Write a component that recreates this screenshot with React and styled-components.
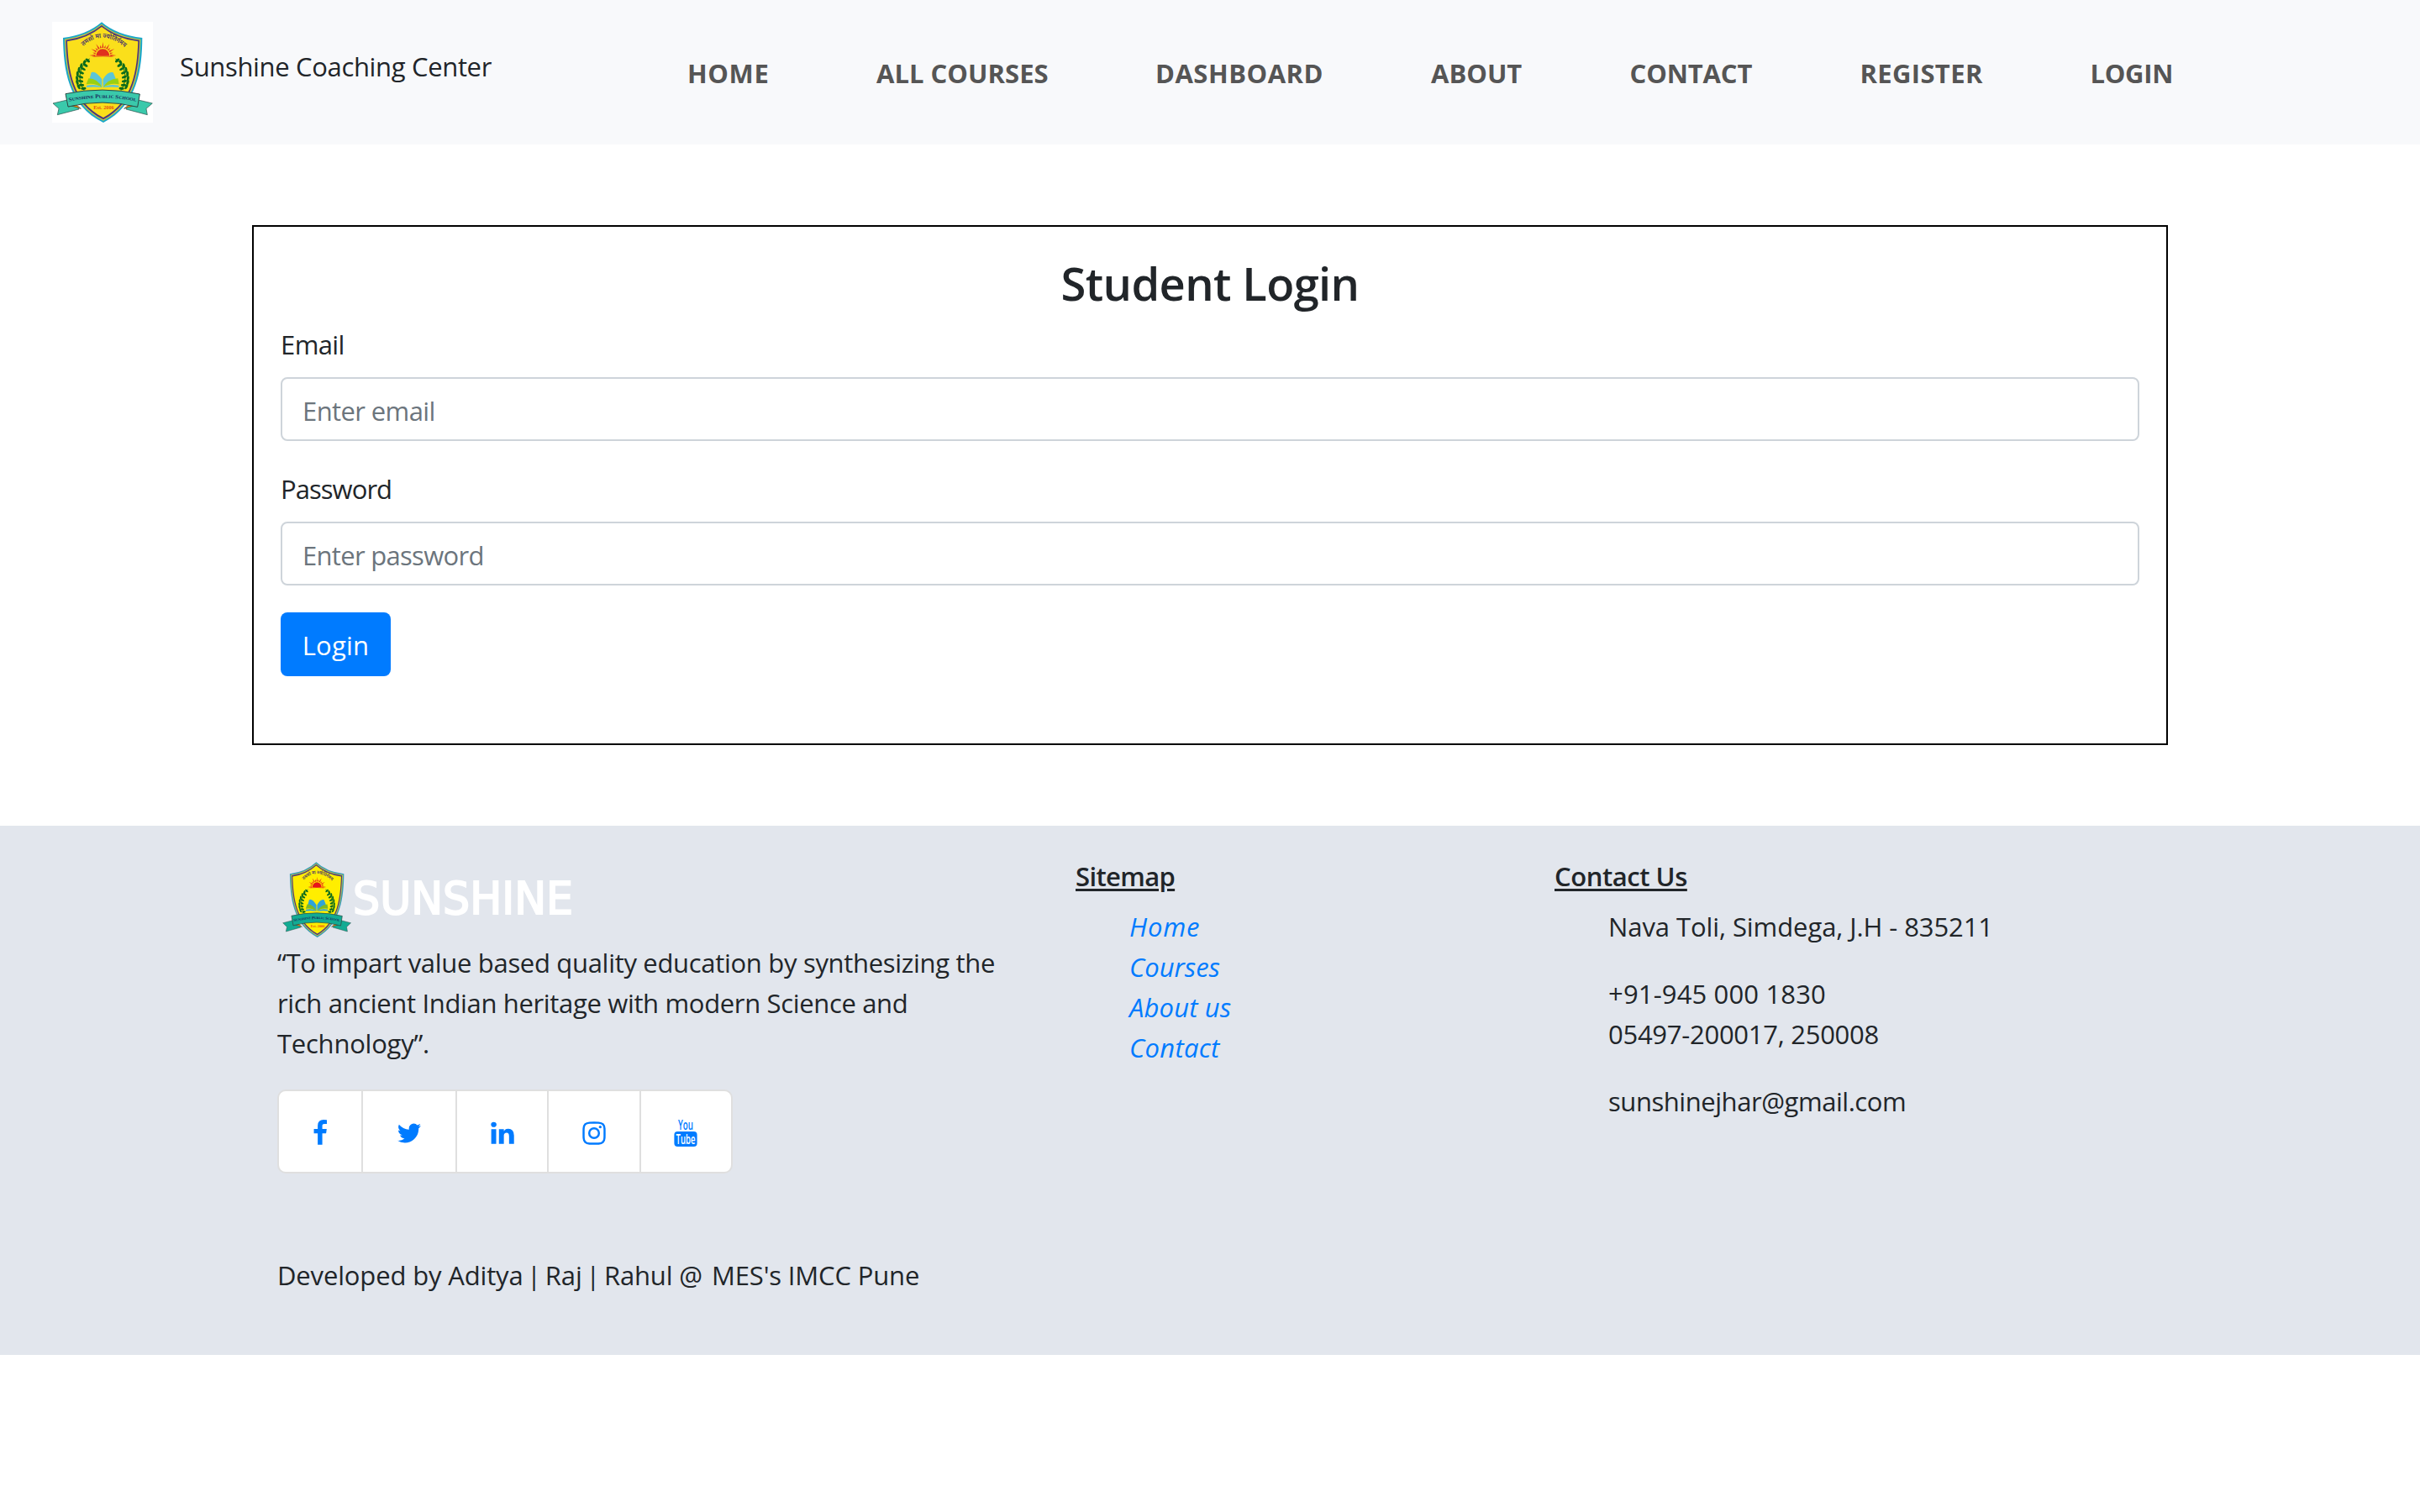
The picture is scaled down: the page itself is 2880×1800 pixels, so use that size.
import React from 'react';
import styled, { createGlobalStyle } from 'styled-components';

const GlobalStyle = createGlobalStyle`
  *, *::before, *::after { box-sizing: border-box; }
  body {
    margin: 0;
    background: #fff;
    color: #212529;
    font-family: 'Open Sans', 'Noto Sans', sans-serif;
    font-size: 31px;
    line-height: 48px;
  }
  a { color: #007bff; text-decoration: none; }
`;

/* A line of copy; $track fine-tunes the letter spacing of that line. */
const Line = styled.span`
  display: block;
  height: 48px;
  padding-top: 1px;
  white-space: nowrap;
  letter-spacing: ${(p) => p.$track || 0}px;
`;

const Header = styled.header`
  display: flex;
  align-items: center;
  height: 172px;
  padding: 0 62px;
  background: #f8f9fb;
`;

const Brand = styled.a`
  display: flex;
  align-items: center;
  gap: 32px;
  width: 756px;
  color: #212529;
`;

const BrandName = styled(Line)`
  margin-bottom: 17px;
`;

const Nav = styled.nav`
  display: grid;
  grid-template-columns: 225px 332px 328px 236.5px 274px 274px auto;
`;

const NavLink = styled(Line).attrs({ as: 'a' })`
  color: #555;
  font-weight: 700;
  text-transform: uppercase;
`;

const LoginBox = styled.form`
  display: flex;
  flex-direction: column;
  align-items: stretch;
  width: 2280px;
  height: 619px;
  margin: 96px auto;
  padding: 32px;
  border: 2px solid #000;
`;

const Title = styled.h2`
  height: 67px;
  margin: 0 0 16px;
  padding-top: 2px;
  font-size: 54.25px;
  font-weight: 600;
  line-height: 67px;
  letter-spacing: -0.63px;
  text-align: center;
`;

const Field = styled.div`
  margin-bottom: 32px;
`;

const Label = styled(Line).attrs({ as: 'label' })`
  margin-bottom: 16px;
`;

const Input = styled.input`
  display: block;
  width: 100%;
  height: 76px;
  padding: 15px 24px 11px;
  border: 2px solid #ced4da;
  border-radius: 8px;
  background: #fff;
  font: inherit;
  letter-spacing: ${(p) => p.$track || 0}px;
  &::placeholder { color: #6c757d; opacity: 1; }
`;

const Submit = styled.button`
  align-self: flex-start;
  width: 131px;
  height: 76px;
  padding: 2px 0 0;
  border: 0;
  border-radius: 8px;
  background: #007bff;
  color: #fff;
  font: inherit;
  letter-spacing: 0.25px;
`;

const Footer = styled.footer`
  height: 630px;
  padding: 32px 300px 0;
  background: #e2e6ed;
`;

const Columns = styled.div`
  display: grid;
  grid-template-columns: 950px 570px 760px;
`;

const Column = styled.section`
  padding: 0 30px;
`;

const FooterLogo = styled.div`
  display: flex;
  align-items: flex-start;
  gap: 2px;
  height: 106px;
  padding: 11px 0 0 6px;
`;

const Wordmark = styled.svg`
  overflow: visible;
`;

const Quote = styled.p`
  margin: 0 0 32px;
`;

const SocialGroup = styled.div`
  display: inline-flex;
  height: 100px;
  border: 2px solid #dfdfdf;
  border-radius: 10px;
  background: #fff;
  overflow: hidden;
`;

const SocialLink = styled.a`
  display: flex;
  align-items: center;
  justify-content: center;
  width: ${(p) => p.$width}px;
  padding-top: 3px;
  & + & { border-left: 2px solid #dfdfdf; }
`;

const Icon = styled.svg`
  flex: none;
  width: 32px;
  height: 32px;
  overflow: visible;
  fill: #007bff;
`;

const Heading = styled(Line).attrs({ as: 'h6' })`
  margin: 3px 0 12px;
  font-size: 31px;
  font-weight: 600;
  text-decoration: underline;
  text-decoration-thickness: 3px;
  text-underline-offset: 3px;
`;

const List = styled.div`
  padding-left: 64px;
  font-style: ${(p) => (p.$italic ? 'italic' : 'normal')};
`;

const MenuLink = styled(Line).attrs({ as: 'a' })``;

const Block = styled.p`
  margin: 0 0 32px;
`;

const Credits = styled.p`
  margin: 96px 0 0;
  padding-left: 30px;
`;

const Pipe = styled.span`
  margin: 0 -3px 0 -3.4px;
`;

const At = styled.span`
  letter-spacing: 3px;
`;

/* Leaves of one half of the laurel wreath: [x, y, angle]. */
const leaves = [
  [163, 171, -50], [151, 178, 20], [155, 188, -60], [140, 190, 10], [147, 201, -62],
  [132, 204, 5], [141, 215, -68], [127, 219, 0], [138, 230, -72], [125, 235, -8],
  [138, 245, -80], [126, 250, -18], [141, 259, -88], [131, 265, -28], [148, 271, -98],
];

const Laurel = () => (
  <g fill="#0a6b1c">
    <path d="M170 165C140 185 120 230 150 278" fill="none" stroke="#0a6b1c" strokeWidth="3" />
    {leaves.map(([x, y, a]) => (
      <ellipse key={`${x}-${y}`} cx={x} cy={y} rx="4.5" ry="9.5" transform={`rotate(${a} ${x} ${y})`} />
    ))}
  </g>
);

const rays = Array.from({ length: 13 }, (_, i) => {
  const at = (deg, r) => {
    const t = (deg * Math.PI) / 180;
    return `${(217 - Math.cos(t) * r).toFixed(1)},${(153 - Math.sin(t) * r).toFixed(1)}`;
  };
  const mid = i * 15;
  return `${at(mid - 6, 27)} ${at(mid + 6, 27)} ${at(mid, i % 2 ? 38 : 48)}`;
});

function Emblem({ id, width, height, backdrop, palette }) {
  const { rim, body, sun, page, leaf, ribbon } = palette;
  return (
    <svg width={width} height={height} viewBox="36 33 360 360" preserveAspectRatio="none">
      {backdrop && <rect x="36" y="33" width="360" height="360" fill="#fff" />}
      <path d="M213 34Q160 80 75 90C77 200 90 330 219 393C342 330 357 200 358 90Q266 80 213 34Z" fill={rim} />
      <path d="M213 41Q162 84 81 95C84 204 98 326 219 386C335 326 349 204 352 95Q264 84 213 41Z" fill="#c9c63c" />
      <path d="M213 45Q162 88 85 98C88 204 102 322 219 382C331 322 345 204 348 98Q264 88 213 45Z" fill="#4a3580" />
      <path d="M213 51Q162 93 90 103C94 204 107 318 219 375C326 318 339 204 343 103Q264 93 213 51Z" fill={body} />
      <path id={`${id}-motto`} d="M147 121Q213 60 291 121" fill="none" />
      <text fontFamily="'Noto Sans', sans-serif" fontSize="23" fontWeight="600" fill="#43306e">
        <textPath href={`#${id}-motto`} startOffset="1" textLength="164" lengthAdjust="spacingAndGlyphs">तमसो मा ज्योतिर्गमय</textPath>
      </text>
      <g fill={sun}>
        {rays.map((r) => <polygon key={r} points={r} />)}
        <path d="M193 154A24 24 0 0 1 241 154Z" />
        <path d="M176 158Q217 150 259 158Q217 155 176 158Z" />
      </g>
      <Laurel />
      <g transform="matrix(-1 0 0 1 432 0)"><Laurel /></g>
      <path d="M176 214Q190 205 214 238V268Q196 240 168 243Z" fill={page} />
      <path d="M254 214Q236 208 218 238V268Q234 244 266 243Z" fill={page} />
      <path d="M166 235Q200 236 214 268Q190 250 158 256Z" fill={leaf} />
      <path d="M271 235Q234 238 218 268Q240 250 275 256Z" fill={leaf} />
      <path d="M160 260Q196 254 214 268Q190 264 158 267ZM273 260Q238 254 218 268Q244 264 275 267Z" fill={page} />
      <g stroke="#2b4a45" strokeWidth="2" strokeLinejoin="round">
        <path d="M39 324L90 312L94 336L122 330L132 345L55 365L60 343Z" fill={ribbon} />
        <path d="M394 324L344 312L340 336L310 330L300 345L376 365L372 343Z" fill={ribbon} />
        <path d="M105 333L122 329L139 343Z" fill="#f08a00" />
        <path d="M326 333L310 329L293 343Z" fill="#f08a00" />
        <path d="M84 290Q215 262 349 291L341 337Q215 306 93 336Z" fill={ribbon} strokeWidth="3" />
      </g>
      <path id={`${id}-name`} d="M96 317Q216 293 337 317" fill="none" />
      <text fontFamily="'Liberation Serif', serif" fontSize="19" fontWeight="700" fill="#182a5c">
        <textPath href={`#${id}-name`} textLength="242" lengthAdjust="spacingAndGlyphs">
          S<tspan fontSize="15">UNSHINE </tspan>P<tspan fontSize="15">UBLIC </tspan>S<tspan fontSize="15">CHOOL</tspan>
        </textPath>
      </text>
      <text x="184" y="344" textLength="73" lengthAdjust="spacingAndGlyphs" fontFamily="'Liberation Serif', serif" fontSize="19" fontWeight="700" fill="#e8500f">Est. 2006</text>
    </svg>
  );
}

const headerPalette = { rim: '#1ba7c9', body: '#fadf1b', sun: '#e0301e', page: '#5cc5d6', leaf: '#9ad012', ribbon: '#3ac9ab' };
const footerPalette = { rim: '#3a9ab5', body: '#ffee00', sun: '#e8141a', page: '#2fa4d8', leaf: '#7db928', ribbon: '#12ab93' };

const navItems = [
  ['Home', 0.6], ['All Courses', 0.03], ['Dashboard', 0.51], ['About', 0],
  ['Contact', -0.12], ['Register', 0.35], ['Login', -0.3],
];

const menuItems = [['Home', 0.81], ['Courses', 0], ['About us', 0.15], ['Contact', 0.28]];

const socials = [
  { name: 'facebook', width: 98.3, d: 'M1343 12v264h-157q-86 0-116 36t-30 108v189h293l-39 296h-254v759h-306v-759h-255v-296h255v-218q0-186 104-288.5t277-102.5q147 0 228 12z' },
  { name: 'twitter', width: 111.7, d: 'M1684 408q-67 98-162 167 1 14 1 42 0 130-38 259.5t-115.5 248.5-184.5 210.5-258 146-323 54.5q-271 0-496-145 35 4 78 4 225 0 401-138-105-2-188-64.5t-114-159.5q33 5 61 5 43 0 85-11-112-23-185.5-111.5t-73.5-205.5v-4q68 38 146 41-66-44-105-115t-39-154q0-88 44-163 121 149 294.5 238.5t371.5 99.5q-8-38-8-74 0-134 94.5-228.5t228.5-94.5q140 0 236 102 109-21 205-78-37 115-142 178 93-10 186-50z' },
  { name: 'linkedin', width: 109.4, d: 'M477 625v991h-330v-991h330zm21-306q1 73-50.5 122t-135.5 49h-2q-82 0-132-49t-50-122q0-74 51.5-122.5t134.5-48.5 133 48.5 51 122.5zm1166 729v568h-329v-530q0-105-40.5-164.5t-126.5-59.5q-63 0-105.5 34.5t-63.5 85.5q-11 30-11 81v553h-329q2-399 2-647t-1-296l-1-48h329v144h-2q20-32 41-56t56.5-52 87-43.5 114.5-15.5q171 0 275 113.5t104 332.5z' },
  { name: 'instagram', width: 109.4, d: 'M1152 896q0-106-75-181t-181-75-181 75-75 181 75 181 181 75 181-75 75-181zm138 0q0 164-115 279t-279 115-279-115-115-279 115-279 279-115 279 115 115 279zm108-410q0 38-27 65t-65 27-65-27-27-65 27-65 65-27 65 27 27 65zm-502-220q-7 0-76.5-.5t-105.5 0-96.5 3-103 10-71.5 18.5q-50 20-88 58t-58 88q-11 29-18.5 71.5t-10 103-3 96.5 0 105.5.5 76.5-.5 76.5 0 105.5 3 96.5 10 103 18.5 71.5q20 50 58 88t88 58q29 11 71.5 18.5t103 10 96.5 3 105.5 0 76.5-.5 76.5.5 105.5 0 96.5-3 103-10 71.5-18.5q50-20 88-58t58-88q11-29 18.5-71.5t10-103 3-96.5 0-105.5-.5-76.5.5-76.5 0-105.5-3-96.5-10-103-18.5-71.5q-20-50-58-88t-88-58q-29-11-71.5-18.5t-103-10-96.5-3-105.5 0-76.5.5zm768 630q0 229-5 317-10 208-124 322t-322 124q-88 5-317 5t-317-5q-208-10-322-124t-124-322q-5-88-5-317t5-317q10-208 124-322t322-124q88-5 317-5t317 5q208 10 322 124t124 322q5 88 5 317z' },
];

const YouTubeIcon = () => (
  <Icon viewBox="0 0 32 32" fontFamily="'Open Sans', sans-serif" fontWeight="600">
    <text x="7" y="12.2" fontSize="16" textLength="18" lengthAdjust="spacingAndGlyphs">You</text>
    <rect x="2.4" y="14" width="27.2" height="18" rx="4" />
    <text x="4.6" y="28.6" fontSize="16" textLength="23" lengthAdjust="spacingAndGlyphs" fill="#fff">Tube</text>
  </Icon>
);

export default function App() {
  return (
    <>
      <GlobalStyle />
      <Header>
        <Brand>
          <Emblem id="header-emblem" width="120" height="120" backdrop palette={headerPalette} />
          <BrandName $track={-0.34}>Sunshine Coaching Center</BrandName>
        </Brand>
        <Nav>
          {navItems.map(([text, track]) => <NavLink key={text} $track={track}>{text}</NavLink>)}
        </Nav>
      </Header>

      <LoginBox>
        <Title>Student Login</Title>
        <Field>
          <Label $track={-0.6}>Email</Label>
          <Input type="email" placeholder="Enter email" $track={-0.6} />
        </Field>
        <Field>
          <Label $track={-0.95}>Password</Label>
          <Input type="password" placeholder="Enter password" $track={-0.7} />
        </Field>
        <Submit type="button">Login</Submit>
      </LoginBox>

      <Footer>
        <Columns>
          <Column>
            <FooterLogo>
              <Emblem id="footer-emblem" width="82" height="90" palette={footerPalette} />
              <Wordmark width="264" height="80" viewBox="0 0 264 80">
                <text x="0" y="61.5" textLength="262" lengthAdjust="spacingAndGlyphs" fontFamily="'DejaVu Sans', sans-serif" fontSize="53" fill="#fff" stroke="#fff" strokeWidth="2">SUNSHINE</text>
              </Wordmark>
            </FooterLogo>
            <Quote>
              <Line $track={-0.31}>“To impart value based quality education by synthesizing the</Line>
              <Line $track={-0.34}>rich ancient Indian heritage with modern Science and</Line>
              <Line $track={-0.24}>Technology”.</Line>
            </Quote>
            <SocialGroup>
              {socials.map(({ name, width, d }) => (
                <SocialLink key={name} $width={width} aria-label={name}>
                  <Icon viewBox="0 0 1792 1792"><path d={d} /></Icon>
                </SocialLink>
              ))}
              <SocialLink $width={109.4}><YouTubeIcon /></SocialLink>
            </SocialGroup>
          </Column>
          <Column>
            <Heading $track={-0.65}>Sitemap</Heading>
            <List $italic>
              {menuItems.map(([text, track]) => <MenuLink key={text} $track={track}>{text}</MenuLink>)}
            </List>
          </Column>
          <Column>
            <Heading $track={-0.45}>Contact Us</Heading>
            <List>
              <Block><Line $track={-0.08}>Nava Toli, Simdega, J.H - 835211</Line></Block>
              <Block>
                <Line $track={0.15}>+91-945 000 1830</Line>
                <Line $track={-0.27}>05497-200017, 250008</Line>
              </Block>
              <Block><Line $track={-0.45}>sunshinejhar@gmail.com</Line></Block>
            </List>
          </Column>
        </Columns>
        <Credits>
          <Line $track={-0.15}>
            Developed by Aditya <Pipe>|</Pipe> Raj <Pipe>|</Pipe> Rahul <At>@</At> MES's IMCC Pune
          </Line>
        </Credits>
      </Footer>
    </>
  );
}
